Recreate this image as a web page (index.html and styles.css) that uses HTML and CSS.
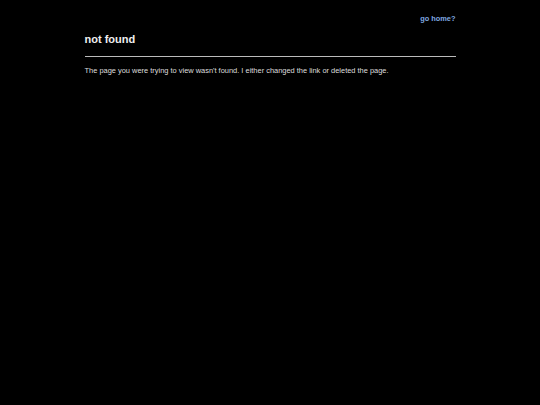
FILE: index.html
```html
<!DOCTYPE html>
<html lang="en">
<head>
    <meta charset="UTF-8">
    <meta name="viewport" content="width=device-width, initial-scale=1.0">
    <title>not found</title>
    <link rel="stylesheet" href="styles.css">
</head>
<body>
    <div class="container">
        <nav class="top-nav">
            <a href="/">go home?</a>
        </nav>
        <h1>not found</h1>
        <p>The page you were trying to view wasn't found. I either changed the link or deleted the page.</p>
    </div>
</body>
</html>
```

FILE: styles.css
```css
body {
    font-family: "Liberation Sans", Arial, sans-serif;
    margin: 0;
    padding: 0;
    background-color: #000;
    color: #eee;
}

.container {
    max-width: 371px;
    margin: 0 auto;
    padding-top: 14px;
}

.top-nav {
    display: flex;
    justify-content: flex-end;
}

.top-nav a {
    font-size: 7.4px;
    font-weight: bold;
    color: #7fa8e0;
    text-decoration: none;
}

h1 {
    font-size: 11px;
    margin: 10px 0 0;
    padding-bottom: 11px;
    border-bottom: 1px solid #bbb;
    color: #eee;
}

p {
    font-size: 7.45px;
    margin: 9px 0 0;
    color: #ddd;
}
```
